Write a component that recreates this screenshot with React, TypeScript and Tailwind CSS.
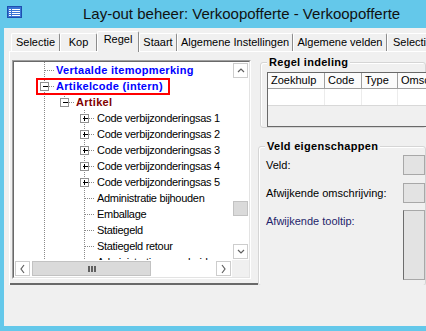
import React from 'react'

const tabs = [
  { label: 'Selectie', w: 'w-[49px]' },
  { label: 'Kop', w: 'w-[37px]' },
  { label: 'Regel', w: 'w-[42px]', active: true },
  { label: 'Staart', w: 'w-[38px]' },
  { label: 'Algemene Instellingen', w: 'w-[116px]' },
  { label: 'Algemene velden', w: 'w-[94px]' },
  { label: 'Selectie', w: 'w-[80px]', left: true },
]

type Row = { level: 1 | 2 | 3; text: string; exp?: '+' | '-'; kind?: 'blue' | 'red' }

const rows: Row[] = [
  { level: 1, text: 'Vertaalde itemopmerking', kind: 'blue' },
  { level: 1, text: 'Artikelcode (intern)', kind: 'blue', exp: '-' },
  { level: 2, text: 'Artikel', kind: 'red', exp: '-' },
  { level: 3, text: 'Code verbijzonderingsas 1', exp: '+' },
  { level: 3, text: 'Code verbijzonderingsas 2', exp: '+' },
  { level: 3, text: 'Code verbijzonderingsas 3', exp: '+' },
  { level: 3, text: 'Code verbijzonderingsas 4', exp: '+' },
  { level: 3, text: 'Code verbijzonderingsas 5', exp: '+' },
  { level: 3, text: 'Administratie bijhouden' },
  { level: 3, text: 'Emballage' },
  { level: 3, text: 'Statiegeld' },
  { level: 3, text: 'Statiegeld retour' },
  { level: 3, text: 'Administratieve eenheid' },
]

// x of the +/- box centre per level, relative to the tree viewport
const lineX = { 1: 30, 2: 50, 3: 70 }
const textPad = { 1: 'pl-[42px]', 2: 'pl-[62px]', 3: 'pl-[83px]' }

function TreeLines() {
  const dot = { stroke: '#8a8a8a', strokeWidth: 1, strokeDasharray: '1 1' }
  return (
    <svg className="absolute left-0 top-0 pointer-events-none" width="218" height="198">
      {/* vertical guide lines */}
      <line x1="30.5" y1="0" x2="30.5" y2="198" {...dot} />
      <line x1="50.5" y1="32" x2="50.5" y2="40" {...dot} />
      <line x1="70.5" y1="48" x2="70.5" y2="198" {...dot} />
      {rows.map((r, i) => {
        const cx = lineX[r.level]
        const cy = i * 16 + 8
        return (
          <g key={i}>
            <line x1={r.exp ? cx + 5 : cx + 1} y1={cy + 0.5} x2={cx + 11} y2={cy + 0.5} {...dot} />
            {r.exp && (
              <g>
                <rect x={cx - 3.5} y={cy - 3.5} width="8" height="8" fill="#fff" stroke="#919191" />
                <line x1={cx - 1} y1={cy + 0.5} x2={cx + 4} y2={cy + 0.5} stroke="#000" />
                {r.exp === '+' && <line x1={cx + 0.5} y1={cy - 2} x2={cx + 0.5} y2={cy + 3} stroke="#000" />}
              </g>
            )}
          </g>
        )
      })}
    </svg>
  )
}

function Chevron({ dir }: { dir: 'up' | 'down' | 'left' | 'right' }) {
  const pts = {
    up: '2,6 5,3 8,6',
    down: '2,3 5,6 8,3',
    left: '6,1 3,5 6,9',
    right: '3,1 6,5 3,9',
  }[dir]
  return (
    <svg width="9" height="10" viewBox="0 0 9 10">
      <polyline points={pts} fill="none" stroke="#606060" strokeWidth="1.2" />
    </svg>
  )
}

function ScrollBtn({ dir }: { dir: 'up' | 'down' | 'left' | 'right' }) {
  return (
    <div className="w-[17px] h-[17px] shrink-0 p-px">
      <div className="w-full h-full border border-[#cdcdcd] bg-white flex items-center justify-center">
        <Chevron dir={dir} />
      </div>
    </div>
  )
}

function Tree() {
  return (
    <div className="w-[239px] h-[219px] border-t border-l border-[#a0a0a0] border-b border-r border-b-white border-r-white">
      <div className="w-full h-full border-t border-l border-[#696969] border-b border-r border-b-[#e3e3e3] border-r-[#e3e3e3] bg-white grid grid-cols-[218px_17px] grid-rows-[198px_17px]">
        <div className="relative overflow-hidden">
          <TreeLines />
          {rows.map((r, i) => (
            <div
              key={i}
              className={`h-[16px] leading-[16px] whitespace-nowrap text-[11px] ${textPad[r.level]} ${
                r.kind === 'blue'
                  ? 'text-[#0000ff] font-bold tracking-[0.3px]'
                  : r.kind === 'red'
                  ? 'text-[#800000] font-bold tracking-[0.3px]'
                  : 'text-black tracking-[-0.3px]'
              }`}
            >
              {r.text}
            </div>
          ))}
          <div className="absolute left-[22px] top-[16px] w-[134px] h-[17px] border-2 border-[#ff0000]" />
        </div>

        {/* vertical scrollbar */}
        <div className="flex flex-col bg-white">
          <ScrollBtn dir="up" />
          <div className="h-[121px]" />
          <div className="h-[17px] p-px">
            <div className="w-full h-full bg-[#dadada] border border-[#c2c2c2]" />
          </div>
          <div className="flex-1" />
          <ScrollBtn dir="down" />
        </div>

        {/* horizontal scrollbar */}
        <div className="flex bg-white">
          <ScrollBtn dir="left" />
          <div className="w-[121px] h-[17px] p-px">
            <div className="w-full h-full bg-[#dadada] border border-[#c2c2c2] flex items-center justify-center gap-px">
              <span className="w-[2px] h-[6px] bg-[#606060]" />
              <span className="w-[2px] h-[6px] bg-[#606060]" />
              <span className="w-[2px] h-[6px] bg-[#606060]" />
            </div>
          </div>
          <div className="flex-1" />
          <ScrollBtn dir="right" />
        </div>
        <div className="bg-[#f0f0f0]" />
      </div>
    </div>
  )
}

function GroupLabel({ children }: { children: React.ReactNode }) {
  return (
    <span className="absolute left-[6px] -top-[7px] px-[2px] bg-[#f0f0f0] text-[11px] leading-[13px] font-bold tracking-[0.3px] text-black">
      {children}
    </span>
  )
}

export default function App() {
  return (
    <div className="w-[426px] h-[331px] overflow-hidden bg-[#64c8ea] flex flex-col font-['Liberation_Sans',Arial,sans-serif]">
      {/* title bar */}
      <div className="h-[28px] shrink-0 flex items-center pl-[7px]">
        <svg width="15" height="12" viewBox="0 0 15 12" className="shrink-0 -mt-[5px]">
          <rect x="0.5" y="0.5" width="14" height="11" fill="#3a74d6" stroke="#1e4fae" />
          {[3, 5, 7, 9].map(y => (
            <g key={y}>
              <rect x="2" y={y} width="2" height="1" fill="#fff" />
              <rect x="5" y={y} width="8" height="1" fill="#fff" />
            </g>
          ))}
        </svg>
        <span className="ml-[61px] text-[15px] leading-[18px] text-[#111] whitespace-nowrap">
          Lay-out beheer: Verkoopofferte - Verkoopofferte
        </span>
      </div>

      {/* client area */}
      <div className="flex-1 ml-[4px] mb-[5px] bg-[#f0f0f0] flex flex-col overflow-hidden">
        {/* tabs */}
        <div className="h-[23px] shrink-0 flex items-end pl-[7px]">
          {tabs.map((t, i) => (
            <div
              key={i}
              className={`${t.w} shrink-0 border-l border-t border-r border-l-white border-t-white border-r-[#8c8c8c] rounded-t-[2px] bg-[#f0f0f0] text-[11px] leading-[13px] text-black whitespace-nowrap overflow-hidden ${
                t.left ? 'text-left pl-[5px]' : 'text-center'
              } ${t.active ? 'h-[21px] -mb-px relative z-10 pt-[1px]' : 'h-[18px] pt-[2px]'}`}
            >
              {t.label}
            </div>
          ))}
        </div>

        {/* tab page */}
        <div className="ml-[5px] h-[234px] shrink-0 border-t border-l border-white flex">
          <div className="w-[248px] h-[233px] shrink-0 border-b-2 border-[#696969] pl-[2px] pt-[8px]">
            <Tree />
          </div>

          <div className="flex-1 h-[233px] overflow-hidden flex flex-col">
            {/* Regel indeling */}
            <div className="relative ml-[2px] mt-[10px] h-[71px] border border-[#d5d5d5] rounded-[3px] shadow-[inset_1px_1px_0_#ffffff] pl-[6px] pt-[9px]">
              <GroupLabel>Regel indeling</GroupLabel>
              <div className="w-[220px] h-[55px] border-t border-l border-b border-[#696969] bg-[#f0f0f0] flex flex-col text-[11px] text-black">
                <div className="h-[16px] flex bg-[#fbfbfb] border-b border-[#a0a0a0] leading-[15px]">
                  <div className="w-[57px] border-r border-[#a0a0a0] pl-[3px]">Zoekhulp</div>
                  <div className="w-[37px] border-r border-[#a0a0a0] pl-[3px]">Code</div>
                  <div className="w-[36px] border-r border-[#a0a0a0] pl-[3px]">Type</div>
                  <div className="flex-1 pl-[3px] whitespace-nowrap">Omschrijving</div>
                </div>
                <div className="h-[17px] flex bg-white border-b border-[#d8d8d8]">
                  <div className="w-[57px] border-r border-[#ececec]" />
                  <div className="w-[37px] border-r border-[#ececec]" />
                  <div className="w-[36px] border-r border-[#ececec]" />
                  <div className="flex-1" />
                </div>
              </div>
            </div>

            {/* Veld eigenschappen */}
            <div className="relative mt-[18px] h-[140px] shrink-0 border border-[#d5d5d5] rounded-[3px] shadow-[inset_1px_1px_0_#ffffff] pl-[7px] pt-[8px] flex flex-col text-[11px] text-black">
              <GroupLabel>Veld eigenschappen</GroupLabel>
              <div className="h-[20px] flex items-center">
                <span className="w-[137px] shrink-0">Veld:</span>
                <div className="w-[60px] h-[20px] bg-[#e3e3e3] border border-[#a8a8a8]" />
              </div>
              <div className="h-[20px] mt-[8px] flex items-center">
                <span className="w-[137px] shrink-0">Afwijkende omschrijving:</span>
                <div className="w-[60px] h-[20px] bg-[#e3e3e3] border border-[#a8a8a8]" />
              </div>
              <div className="h-[70px] mt-[7px] flex items-start">
                <span className="w-[137px] shrink-0 pt-[3px] text-[#1f1f6b]">Afwijkende tooltip:</span>
                <div className="w-[60px] h-[70px] bg-[#e3e3e3] border border-[#a8a8a8] border-l-[#6d6d6d]" />
              </div>
            </div>
          </div>
        </div>
      </div>
    </div>
  )
}
